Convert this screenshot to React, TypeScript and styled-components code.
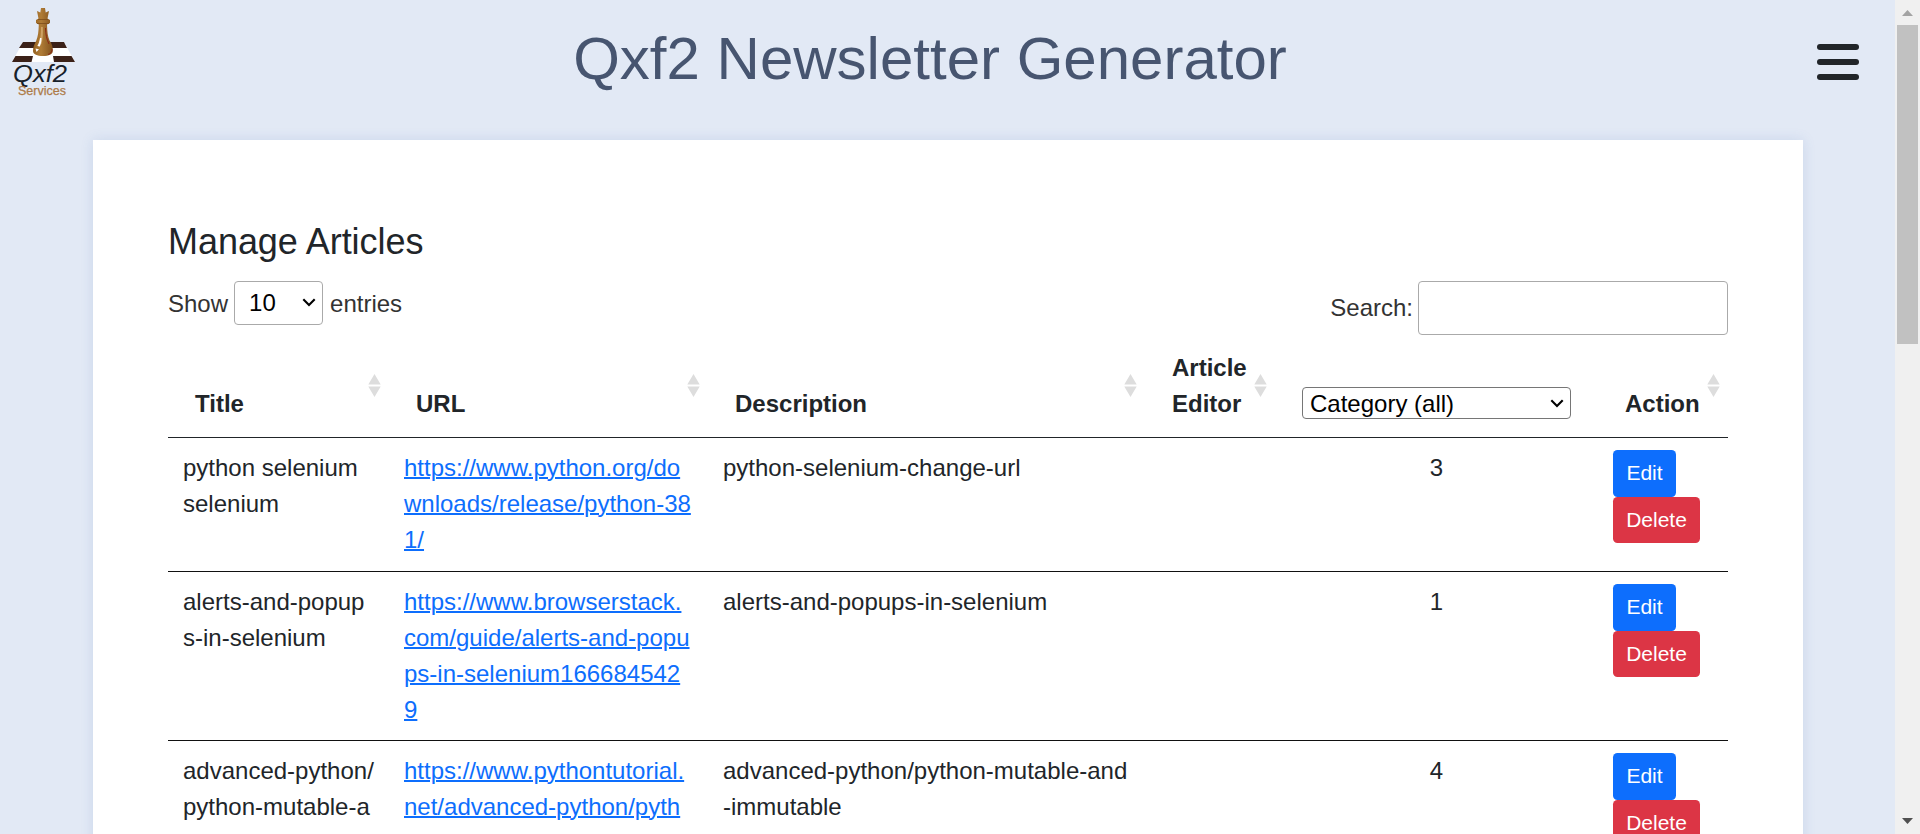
import React from "react";
import styled, { createGlobalStyle } from "styled-components";

const GlobalStyle = createGlobalStyle`
  * { box-sizing: border-box; }
  body {
    margin: 0;
    background: #e2e9f5;
    color: #212529;
    font-family: "Liberation Sans", Arial, sans-serif;
    font-size: 24px;
    line-height: 36px;
    overflow: hidden;
  }
`;

const Shell = styled.div`
  display: flex;
  height: 834px;
  overflow: hidden;
`;

const Page = styled.div`
  flex: 1;
  min-width: 0;
  height: 834px;
  overflow: hidden;
`;

const Header = styled.header`
  display: grid;
  grid-template-columns: 120px 1fr 120px;
  height: 140px;
`;

const Logo = styled.svg`
  display: block;
  margin: 4px 0 0 8px;
`;

const SiteTitle = styled.h1`
  margin: 23px 35px 0 0;
  color: #475570;
  font-size: 60px;
  font-weight: 400;
  line-height: 72px;
  text-align: center;
  white-space: nowrap;
`;

const MenuButton = styled.button`
  display: flex;
  flex-direction: column;
  gap: 9px;
  width: 42px;
  height: 36px;
  margin: 44px 0 0 42px;
  padding: 0;
  border: 0;
  background: none;
`;

const MenuBar = styled.span`
  width: 42px;
  height: 6px;
  border-radius: 3px;
  background: #212529;
`;

const Card = styled.main`
  width: 1710px;
  height: 900px;
  margin-left: 93px;
  padding: 80px 75px 0;
  background: #fff;
  box-shadow: 0 0 12px rgba(70, 110, 180, 0.15);
`;

const Heading = styled.h2`
  margin: 0;
  font-size: 36px;
  font-weight: 400;
  line-height: 43px;
  letter-spacing: -0.05px;
`;

const Controls = styled.div`
  display: flex;
  justify-content: space-between;
  align-items: flex-start;
  height: 53px;
  margin-top: 18px;
  color: #333;
`;

const Control = styled.label`
  display: flex;
  align-items: center;
`;

const SelectBox = styled.span<{ $compact?: boolean }>`
  display: flex;
  align-items: center;
  justify-content: space-between;
  width: ${(p) => (p.$compact ? "269px" : "89px")};
  height: ${(p) => (p.$compact ? "32px" : "44px")};
  padding: ${(p) => (p.$compact ? "2px 6px 0 7px" : "0 6px 0 14px")};
  border: 1px solid ${(p) => (p.$compact ? "#767676" : "#aaa")};
  border-radius: 4px;
  color: #000;
  font-weight: 400;
`;

const LengthText = styled.span`
  margin-right: 6px;
  padding-top: 2px;
`;

const EntriesText = styled.span`
  margin-left: 7px;
  padding-top: 2px;
`;

const SearchInput = styled.input`
  width: 310px;
  height: 54px;
  margin-left: 5px;
  padding: 7px;
  border: 1px solid #aaa;
  border-radius: 4px;
  background: transparent;
  font: inherit;
`;

const Table = styled.table`
  width: 1560px;
  table-layout: fixed;
  border-collapse: separate;
  border-spacing: 0;
`;

const Th = styled.th<{ $filter?: boolean }>`
  height: 104px;
  padding: ${(p) => (p.$filter ? "15px 27px 18px" : "15px 0 15px 27px")};
  border-bottom: 1px solid #212529;
  text-align: left;
  vertical-align: bottom;
`;

const ThInner = styled.div`
  display: flex;
  align-items: flex-end;
  justify-content: space-between;
  height: 72px;
`;

const SortIcon = styled.svg`
  flex: none;
  align-self: center;
  margin: 0 8px 2px 0;
`;

const Td = styled.td<{ $height: number; $center?: boolean }>`
  height: ${(p) => p.$height}px;
  padding: 12px 15px;
  border-bottom: 1px solid #111;
  text-align: ${(p) => (p.$center ? "center" : "left")};
  vertical-align: top;
  word-break: break-all;
`;

const Link = styled.a`
  color: #0d6efd;
  text-decoration: underline;
  text-decoration-thickness: 2px;
`;

const Actions = styled.div`
  display: flex;
  flex-direction: column;
  align-items: flex-start;
`;

const ActionButton = styled.button<{ $danger?: boolean }>`
  width: ${(p) => (p.$danger ? "87px" : "63px")};
  height: 46.5px;
  padding: 0;
  border: 0;
  border-radius: 4.5px;
  background: ${(p) => (p.$danger ? "#dc3545" : "#0d6efd")};
  color: #fff;
  font: 21px "Liberation Sans", Arial, sans-serif;
`;

const Scrollbar = styled.div`
  display: flex;
  flex-direction: column;
  align-items: center;
  flex: none;
  width: 25px;
  background: #f0f0f0;
`;

const Thumb = styled.div`
  width: 21px;
  height: 319px;
  margin-bottom: auto;
  background: #c1c1c1;
`;

const articles = [
  {
    title: "python selenium selenium",
    url: "https://www.python.org/downloads/release/python-381/",
    description: "python-selenium-change-url",
    category: 3,
    height: 134,
  },
  {
    title: "alerts-and-popups-in-selenium",
    url: "https://www.browserstack.com/guide/alerts-and-popups-in-selenium1666845429",
    description: "alerts-and-popups-in-selenium",
    category: 1,
    height: 169,
  },
  {
    title: "advanced-python/python-mutable-a",
    url: "https://www.pythontutorial.net/advanced-python/pyth",
    description: "advanced-python/python-mutable-and-immutable",
    category: 4,
    height: 169,
  },
];

const Chevron = () => (
  <svg width="14" height="10" viewBox="0 0 14 10" fill="none">
    <path d="M1.3 1.3 7 7l5.7-5.700" stroke="#000" strokeWidth="2.1" />
  </svg>
);

const Sort = () => (
  <SortIcon width="13" height="23" viewBox="0 0 13 23">
    <path d="M6.5 0 12.7 10.6H.3zM.3 12.4h12.4L6.5 23z" fill="#ddd" />
  </SortIcon>
);

const BrandLogo = () => (
  <Logo width="72" height="96" viewBox="8 4 72 96" role="img" aria-label="Qxf2 Services">
    <defs>
      <linearGradient id="piece" x1="0" x2="1">
        <stop offset="0" stopColor="#94601f" />
        <stop offset=".4" stopColor="#b07c36" />
        <stop offset="1" stopColor="#80501c" />
      </linearGradient>
    </defs>
    <path d="M23 42H64L75 62H12z" fill="#fff" />
    <path d="M23 42H38V48H19zM50 42H64L67 48H52zM15.500 56H33L31.500 62H12zM53 56H71.500L75 62H54z" fill="#3b2118" />
    <path
      d="m37 11 3.300 1.500L41 8h4l.7 4.500L49 11l-1.500 7.500 2.500 1.500v3l-3 1.500c.2 7 .8 12 2.500 16C52 44 53 47 52.800 51c-.1 3.500-4 5-9.800 5s-9.900-1.500-10-5c-.1-4 1.500-6.500 3.300-10.500 1.700-4 2.300-9 2.500-16L36 23v-3l2.500-1.500z"
      fill="url(#piece)"
    />
    <path d="M38 19.500h10M37 23.500h12" stroke="#7c4c1a" strokeWidth=".8" fill="none" />
    <path d="M45.500 28c.2 6 1 11 3.500 16M52 49c.3 3-1.500 4.500-4 5.500" stroke="#8c2414" strokeWidth="1" fill="none" />
    <path d="M41 27c0 8-.6 12-2 16l2.500 1c1.300-5 1.600-10 1.300-17z" fill="#cfa263" />
    <path d="M40 38c-.4 3-1.400 6-2.600 8l2.400.6c1.300-3 1.700-5.500 1.700-8.600zM35.500 48.500l3.500.8-2.500 2.700z" fill="#fff" />
    <text x="13" y="82" fontFamily="Liberation Sans" fontSize="23" fontStyle="italic" fill="#18212a" textLength="54" lengthAdjust="spacingAndGlyphs">
      Qxf2
    </text>
    <text x="18" y="94.500" fontFamily="Liberation Sans" fontSize="12.500" fill="#ad7b48" stroke="#ad7b48" strokeWidth=".25" textLength="48" lengthAdjust="spacingAndGlyphs">
      Services
    </text>
  </Logo>
);

const ScrollArrow = ({ down = false }: { down?: boolean }) => (
  <svg width="25" height="25" viewBox="0 0 25 25">
    <path d={down ? "M7 9h11l-5.5 6z" : "M7 16h11l-5.5-6z"} fill={down ? "#505050" : "#a3a3a3"} />
  </svg>
);

const SortableTh = ({ children }: { children: React.ReactNode }) => (
  <Th>
    <ThInner>
      <span>{children}</span>
      <Sort />
    </ThInner>
  </Th>
);

export default function App() {
  return (
    <>
      <GlobalStyle />
      <Shell>
        <Page>
          <Header>
            <BrandLogo />
            <SiteTitle>Qxf2 Newsletter Generator</SiteTitle>
            <MenuButton aria-label="Menu">
              <MenuBar />
              <MenuBar />
              <MenuBar />
            </MenuButton>
          </Header>
          <Card>
            <Heading>Manage Articles</Heading>
            <Controls>
              <Control>
                <LengthText>Show</LengthText>
                <SelectBox>
                  10
                  <Chevron />
                </SelectBox>
                <EntriesText>entries</EntriesText>
              </Control>
              <Control>
                Search:
                <SearchInput aria-label="Search" />
              </Control>
            </Controls>
            <Table>
              <colgroup>
                <col width="221" />
                <col width="319" />
                <col width="437" />
                <col width="130" />
                <col width="323" />
                <col width="130" />
              </colgroup>
              <thead>
                <tr>
                  <SortableTh>Title</SortableTh>
                  <SortableTh>URL</SortableTh>
                  <SortableTh>Description</SortableTh>
                  <SortableTh>
                    Article
                    <br />
                    Editor
                  </SortableTh>
                  <Th $filter>
                    <SelectBox $compact>
                      Category (all)
                      <Chevron />
                    </SelectBox>
                  </Th>
                  <SortableTh>Action</SortableTh>
                </tr>
              </thead>
              <tbody>
                {articles.map((a) => (
                  <tr key={a.title}>
                    <Td $height={a.height}>{a.title}</Td>
                    <Td $height={a.height}>
                      <Link href="#">{a.url}</Link>
                    </Td>
                    <Td $height={a.height}>{a.description}</Td>
                    <Td $height={a.height} />
                    <Td $height={a.height} $center>
                      {a.category}
                    </Td>
                    <Td $height={a.height}>
                      <Actions>
                        <ActionButton>Edit</ActionButton>
                        <ActionButton $danger>Delete</ActionButton>
                      </Actions>
                    </Td>
                  </tr>
                ))}
              </tbody>
            </Table>
          </Card>
        </Page>
        <Scrollbar>
          <ScrollArrow />
          <Thumb />
          <ScrollArrow down />
        </Scrollbar>
      </Shell>
    </>
  );
}
